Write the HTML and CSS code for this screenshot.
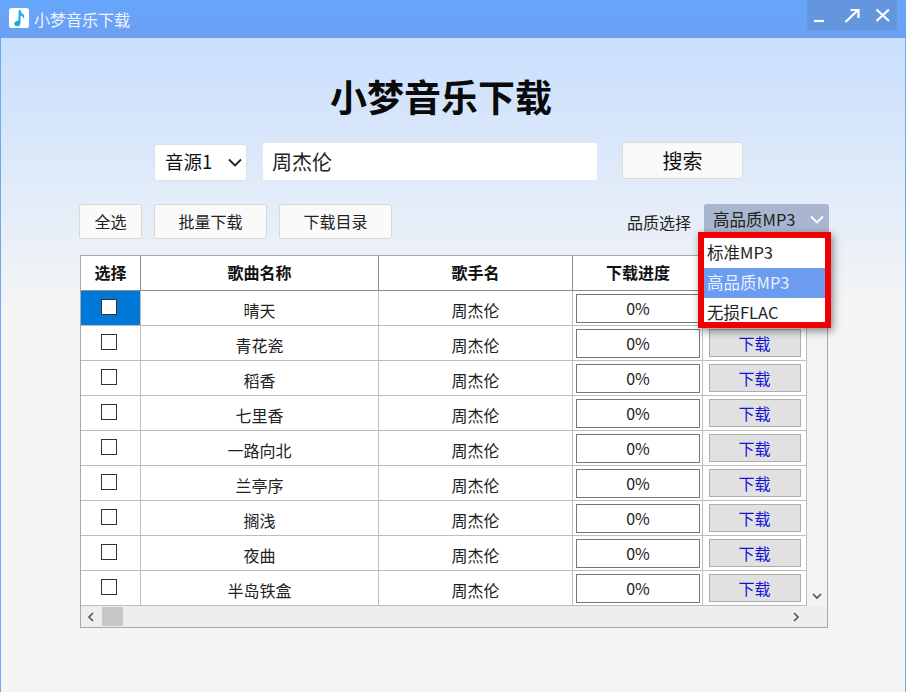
FILE: index.html
```html
<!DOCTYPE html>
<html lang="zh-CN">
<head>
<meta charset="utf-8">
<title>小梦音乐下载</title>
<link rel="stylesheet" href="styles.css">
</head>
<body>
<div class="window">
  <header class="titlebar">
    <svg class="app-icon" viewBox="0 0 20 20" width="20" height="20"><rect width="20" height="20" rx="2.5" fill="#fff"/><path d="M9.800 2h1.600c.4 2.400 1.600 3.200 3 4.500 1.100 1.100 1.100 2.900.3 4.300-.3-1.600-1.500-3-3.200-3.400v7.500c0 1.900-1.500 3.400-3.500 3.400-1.600 0-2.800-1-2.800-2.500 0-1.800 1.700-3.100 3.500-3.100.2 0 .4 0 .6.100z" fill="#17ade6"/></svg>
    <span class="app-name">小梦音乐下载</span>
    <div class="win-controls">
      <svg viewBox="0 0 90 30" width="90" height="30" fill="none" stroke="#fff" stroke-width="2.200"><path d="M7 21h10"/><path d="M38.500 22 50.500 10.500M43.500 10h8v8"/><path d="M69.500 9.500 82 21M82 9.500 69.500 21"/></svg>
    </div>
  </header>
  <main class="main">
    <h1 class="heading">小梦音乐下载</h1>
    <div class="search-row">
      <div class="source-select"><span>音源1</span>
        <svg viewBox="0 0 14 9" width="14" height="9" fill="none" stroke="#222" stroke-width="1.800"><path d="M1 1.500 7 7.500 13 1.500"/></svg>
      </div>
      <div class="search-input">周杰伦</div>
      <div class="search-btn">搜索</div>
    </div>
    <div class="toolbar">
      <div class="tool-btn w-small">全选</div>
      <div class="tool-btn w-large">批量下载</div>
      <div class="tool-btn w-large">下载目录</div>
      <span class="quality-label">品质选择</span>
      <div class="quality">
        <div class="quality-select"><span>高品质MP3</span>
          <svg viewBox="0 0 14 9" width="14" height="9" fill="none" stroke="#fff" stroke-width="1.800"><path d="M1 1.500 7 7.500 13 1.500"/></svg>
        </div>
        <div class="quality-menu">
          <div class="menu-item">标准MP3</div>
          <div class="menu-item active">高品质MP3</div>
          <div class="menu-item">无损FLAC</div>
        </div>
      </div>
    </div>
    <div class="table-box">
      <div class="table-top">
        <div class="table">
          <div class="row head"><div class="cell">选择</div><div class="cell">歌曲名称</div><div class="cell">歌手名</div><div class="cell">下载进度</div><div class="cell"></div></div>
          <div class="row"><div class="cell selected"><i class="check"></i></div><div class="cell">晴天</div><div class="cell">周杰伦</div><div class="cell"><div class="progress">0%</div></div><div class="cell"></div></div>
          <div class="row"><div class="cell"><i class="check"></i></div><div class="cell">青花瓷</div><div class="cell">周杰伦</div><div class="cell"><div class="progress">0%</div></div><div class="cell"><div class="dl-btn">下载</div></div></div>
          <div class="row"><div class="cell"><i class="check"></i></div><div class="cell">稻香</div><div class="cell">周杰伦</div><div class="cell"><div class="progress">0%</div></div><div class="cell"><div class="dl-btn">下载</div></div></div>
          <div class="row"><div class="cell"><i class="check"></i></div><div class="cell">七里香</div><div class="cell">周杰伦</div><div class="cell"><div class="progress">0%</div></div><div class="cell"><div class="dl-btn">下载</div></div></div>
          <div class="row"><div class="cell"><i class="check"></i></div><div class="cell">一路向北</div><div class="cell">周杰伦</div><div class="cell"><div class="progress">0%</div></div><div class="cell"><div class="dl-btn">下载</div></div></div>
          <div class="row"><div class="cell"><i class="check"></i></div><div class="cell">兰亭序</div><div class="cell">周杰伦</div><div class="cell"><div class="progress">0%</div></div><div class="cell"><div class="dl-btn">下载</div></div></div>
          <div class="row"><div class="cell"><i class="check"></i></div><div class="cell">搁浅</div><div class="cell">周杰伦</div><div class="cell"><div class="progress">0%</div></div><div class="cell"><div class="dl-btn">下载</div></div></div>
          <div class="row"><div class="cell"><i class="check"></i></div><div class="cell">夜曲</div><div class="cell">周杰伦</div><div class="cell"><div class="progress">0%</div></div><div class="cell"><div class="dl-btn">下载</div></div></div>
          <div class="row"><div class="cell"><i class="check"></i></div><div class="cell">半岛铁盒</div><div class="cell">周杰伦</div><div class="cell"><div class="progress">0%</div></div><div class="cell"><div class="dl-btn">下载</div></div></div>
        </div>
        <div class="vscroll">
          <svg viewBox="0 0 10 7" width="10" height="7" fill="none" stroke="#555" stroke-width="1.700"><path d="M1 6 5 2 9 6"/></svg>
          <svg viewBox="0 0 10 7" width="10" height="7" fill="none" stroke="#555" stroke-width="1.700"><path d="M1 1 5 5 9 1"/></svg>
        </div>
      </div>
      <div class="hscroll">
        <svg viewBox="0 0 7 10" width="7" height="10" fill="none" stroke="#555" stroke-width="1.700"><path d="M6 1 2 5 6 9"/></svg>
        <div class="thumb"></div>
        <svg class="arrow-right" viewBox="0 0 7 10" width="7" height="10" fill="none" stroke="#555" stroke-width="1.700"><path d="M1 1 5 5 1 9"/></svg>
      </div>
    </div>
  </main>
</div>
</body>
</html>
```
FILE: styles.css
```css
* { box-sizing: border-box; }
html, body { margin: 0; height: 100%; }
body {
  font-family: "Noto Sans CJK SC", "Liberation Sans", sans-serif;
  color: #111;
  overflow: hidden;
}
.window { display: flex; flex-direction: column; width: 906px; height: 692px; }
.titlebar {
  flex: none;
  height: 38px;
  display: flex;
  align-items: flex-start;
  padding-left: 9px;
  background: linear-gradient(#66a7fb, #6c9ff2);
  color: #fff;
  position: relative;
}
.app-icon { margin-top: 8px; }
.app-name { margin-left: 5px; font-size: 16px; line-height: 20px; margin-top: 9px; color: #eef5ff; }
.win-controls {
  margin-left: auto;
  margin-right: 9px;
  width: 90px;
  height: 30px;
  background: #6496de;
  border-radius: 0 0 2px 2px;
}
.win-controls svg { display: block; }
.main {
  flex: 1;
  display: flex;
  flex-direction: column;
  border-left: 1px solid #6aaaf5;
  border-right: 1px solid #6aaaf5;
  background: linear-gradient(#c9dffd 0, #f5f5f5 42%, #f5f5f5 100%);
}
.heading {
  margin: 34px 0 0;
  height: 50px;
  line-height: 48px;
  padding-right: 24px;
  font-size: 37px;
  font-weight: 700;
  text-align: center;
  color: #0a0a0a;
}
.search-row { display: flex; align-items: flex-start; margin-top: 20px; padding-left: 153px; }
.source-select {
  margin-top: 2px;
  width: 93px;
  height: 37px;
  display: flex;
  align-items: center;
  justify-content: space-between;
  padding: 0 4px 0 10px;
  background: #fff;
  border: 1px solid #dde1e6;
  border-radius: 3px;
  font-size: 18.5px;
}
.source-select span { margin-bottom: 3px; }
.search-input {
  margin-left: 15px;
  width: 336px;
  height: 39px;
  line-height: 37px;
  padding-left: 9px;
  background: #fff;
  border: 1px solid #e4e8ee;
  border-radius: 3px;
  font-size: 20px;
  color: #222;
}
.search-btn {
  margin-left: 24px;
  width: 121px;
  height: 37px;
  line-height: 35px;
  text-align: center;
  background: #fafafa;
  border: 1px solid #dcdcdc;
  border-radius: 3px;
  font-size: 20px;
}
.toolbar { display: flex; align-items: flex-start; margin-top: 23px; padding-left: 78px; padding-right: 76px; height: 35px; }
.tool-btn {
  height: 35px;
  line-height: 33px;
  margin-right: 12px;
  text-align: center;
  background: #fafafa;
  border: 1px solid #d8d8d8;
  border-radius: 3px;
  font-size: 16px;
  color: #222;
}
.w-small { width: 63px; }
.w-large { width: 113px; }
.quality-label { margin-left: auto; margin-right: 13px; height: 35px; font-size: 16px; line-height: 37px; color: #222; }
.quality { position: relative; width: 125px; }
.quality-select {
  height: 31px;
  display: flex;
  align-items: center;
  justify-content: space-between;
  padding: 0 5px 0 9px;
  background: #a9b6cf;
  border-radius: 3px 3px 0 0;
  font-size: 16.5px;
  color: #222;
}
.quality-select span { margin-bottom: 2px; }
.quality-menu {
  position: absolute;
  top: 28px;
  left: -6px;
  width: 133px;
  height: 96px;
  overflow: hidden;
  background: #fff;
  border: 6px solid #f00000;
  box-shadow: 2px 3px 8px rgba(0, 0, 0, .45);
  font-size: 16.5px;
  color: #222;
}
.menu-item { height: 30px; line-height: 29px; padding-left: 3px; }
.menu-item.active { background: #6b9cf0; color: #e8f0ff; }
.table-box {
  margin-top: 16px;
  margin-left: 79px;
  width: 748px;
  height: 373px;
  border: 1px solid #a8a8a8;
  display: flex;
  flex-direction: column;
}
.table-top { display: flex; flex: none; height: 350px; }
.table { width: 726px; background: #fff; }
.row {
  display: grid;
  grid-template-columns: 60px 238px 194px 130px 104px;
  height: 35px;
  border-bottom: 1px solid #bdbdbd;
}
.cell {
  display: flex;
  align-items: center;
  justify-content: center;
  padding-top: 3px;
  border-right: 1px solid #bdbdbd;
  font-size: 16px;
  color: #222;
}
.row.head { border-bottom-color: #8c8c8c; }
.row.head .cell { padding-top: 0; padding-bottom: 2px; font-weight: 700; color: #111; border-right-color: #8c8c8c; }
.cell.selected { background: #0078d7; border-right-color: #bdbdbd; }
.check {
  display: block;
  width: 16px;
  height: 16px;
  margin-top: -5px;
  margin-left: -3px;
  background: #fff;
  border: 1px solid #333;
}
.progress {
  width: 124px;
  height: 29px;
  margin-top: -2px;
  line-height: 26px;
  text-align: center;
  background: #fff;
  border: 1px solid #767676;
}
.cell:nth-child(4) { padding-left: 1px; }
.dl-btn {
  width: 92px;
  height: 28px;
  margin-top: -3px;
  line-height: 26px;
  text-align: center;
  background: #e1e1e1;
  border: 1px solid #adadad;
  color: #1414d8;
}
.vscroll {
  width: 20px;
  background: #f3f3f3;
  display: flex;
  flex-direction: column;
  align-items: center;
  justify-content: space-between;
  padding: 7px 0 6px;
}
.hscroll {
  flex: 1;
  display: flex;
  align-items: center;
  padding: 0 0 0 6px;
  background: #eeeeee;
}
.thumb { width: 21px; height: 19px; margin-left: 8px; background: #c8c8c8; }
.arrow-right { margin-left: auto; margin-right: 27px; }
```
